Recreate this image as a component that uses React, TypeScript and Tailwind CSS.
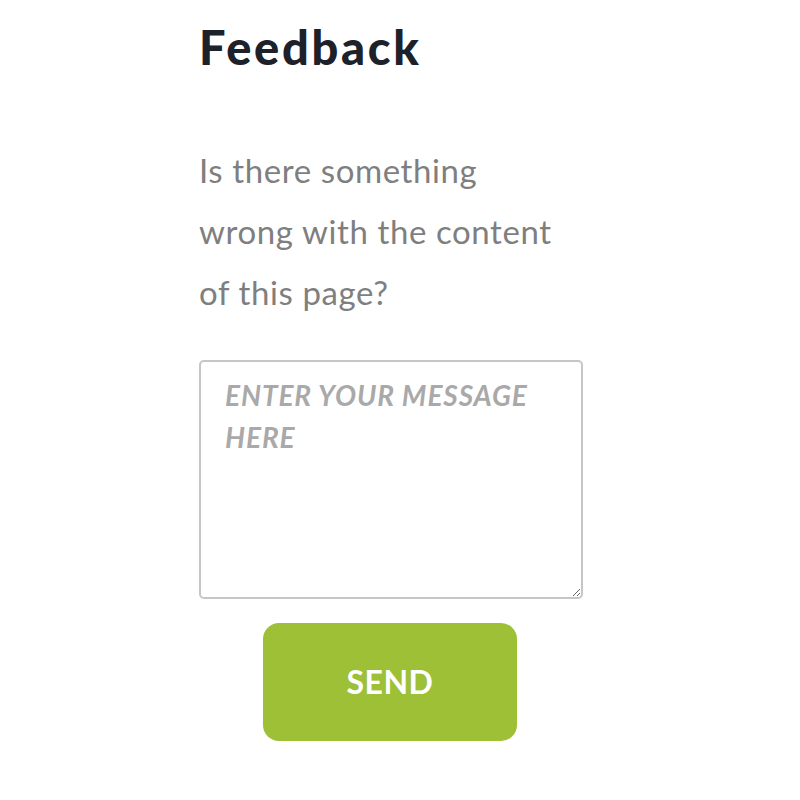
import React, { useState } from 'react'

export default function App() {
  const [message, setMessage] = useState('')

  return (
    <div className="min-h-[800px] bg-white font-['Lato',_'Open_Sans',_sans-serif]">
      <div className="flex w-[384px] flex-col ml-[199px] pt-[21px]">
        <h1 className="text-[47px] font-black leading-[52px] tracking-[2.7px] text-[#1d2129]">
          Feedback
        </h1>

        <p className="mt-[67px] text-[33px] leading-[61px] tracking-[0.6px] text-[#7f7f7f]">
          Is there something
          <br />
          wrong with the content
          <br />
          of this page?
        </p>

        <textarea
          value={message}
          onChange={(e) => setMessage(e.target.value)}
          placeholder="ENTER YOUR MESSAGE HERE"
          className="mt-[37px] h-[239px] w-[384px] rounded-[5px] border-2 border-[#c6c6c6] px-6 pt-[12px] text-[28px] font-bold italic leading-[42px] tracking-[0.9px] text-[#555] placeholder:text-[#a9a9a9] focus:outline-none"
        />

        <button
          type="button"
          className="mt-[24px] ml-[64px] flex h-[118px] w-[254px] items-center justify-center rounded-[16px] bg-[#9dc036] text-[32px] font-bold tracking-[0.5px] text-white"
        >
          SEND
        </button>
      </div>
    </div>
  )
}
